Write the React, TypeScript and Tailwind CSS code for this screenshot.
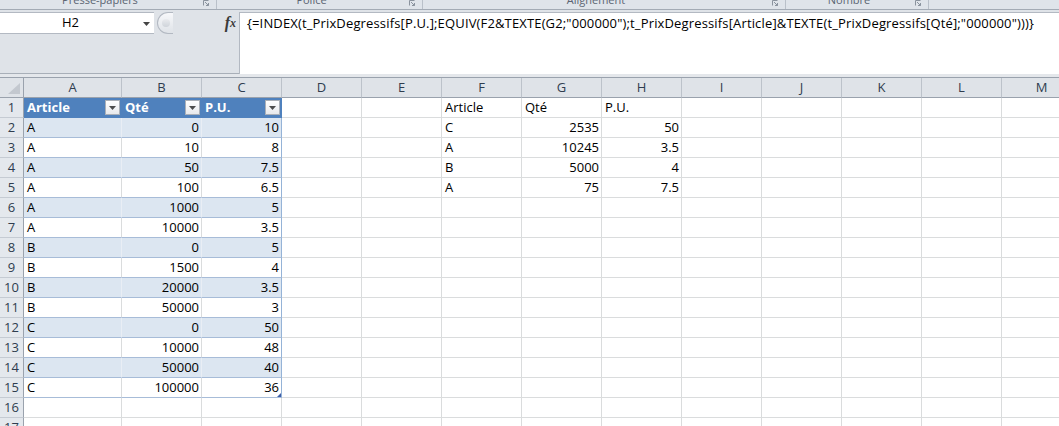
import React from "react";

const COLS = ["A", "B", "C", "D", "E", "F", "G", "H", "I", "J", "K", "L", "M"];
const WIDTHS = [
  "w-[98px]", "w-[80px]", "w-[80px]", "w-[80px]", "w-[80px]", "w-[80px]", "w-[80px]",
  "w-[80px]", "w-[80px]", "w-[80px]", "w-[80px]", "w-[80px]", "w-[80px]",
];

// rows 2..15 of t_PrixDegressifs
const PRIX: [string, number, number][] = [
  ["A", 0, 10], ["A", 10, 8], ["A", 50, 7.5], ["A", 100, 6.5], ["A", 1000, 5], ["A", 10000, 3.5],
  ["B", 0, 5], ["B", 1500, 4], ["B", 20000, 3.5], ["B", 50000, 3],
  ["C", 0, 50], ["C", 10000, 48], ["C", 50000, 40], ["C", 100000, 36],
];

const LOOKUP: (string | number)[][] = [
  ["Article", "Qté", "P.U."],
  ["C", 2535, 50],
  ["A", 10245, 3.5],
  ["B", 5000, 4],
  ["A", 75, 7.5],
];

const FORMULA =
  '{=INDEX(t_PrixDegressifs[P.U.];EQUIV(F2&TEXTE(G2;"000000");t_PrixDegressifs[Article]&TEXTE(t_PrixDegressifs[Qté];"000000")))}';

function Launcher() {
  return (
    <svg width="7" height="7" viewBox="0 0 7 7" className="absolute right-[6px] top-[0px]">
      <path d="M0.5 0.5H5.5" stroke="#8a939e" />
      <path d="M0.5 0.5V5.5" stroke="#8a939e" />
      <path d="M2 2L5.5 5.5M5.5 3V5.5H3" stroke="#8a939e" fill="none" />
    </svg>
  );
}

function Group({ label, w }: { label: string; w: string }) {
  return (
    <div className={`relative h-full ${w} border-r border-[#b9c0c9] pr-[16px] text-center`}>
      <div className="-mt-[7px] text-[11px] leading-[13px] text-[#5b6472]">{label}</div>
      <Launcher />
    </div>
  );
}

function FilterBtn() {
  return (
    <div className="ml-auto w-[15px] h-[15px] border border-[#aab0b8] bg-gradient-to-b from-white to-[#e7e9ec] flex items-center justify-center">
      <svg width="7" height="4" viewBox="0 0 7 4">
        <path d="M0 0H7L3.5 4Z" fill="#4d4d4d" />
      </svg>
    </div>
  );
}

function cell(r: number, c: number) {
  // returns classes + content for one grid cell
  let cls = "border-r border-b border-[#dadcdd] bg-white text-black";
  let content: React.ReactNode = null;
  let right = false;

  if (r === 1 && c < 3) {
    cls = "border-r border-b border-[#4f81bd] bg-[#4f81bd] text-white font-bold";
    content = (
      <>
        <span>{["Article", "Qté", "P.U."][c]}</span>
        <FilterBtn />
      </>
    );
    return { cls: `${cls} pr-[1px]`, content, right };
  }

  if (r >= 2 && r <= 15 && c < 3) {
    const row = PRIX[r - 2];
    const band = r % 2 === 0;
    const bg = band ? "bg-[#dce6f1]" : "bg-white";
    const rb = c === 2 ? "border-r-[#95b3d7]" : band ? "border-r-[#e9eef5]" : "border-r-[#dadcdd]";
    cls = `border-r border-b border-b-[#a7bcd8] ${rb} ${bg} text-black`;
    content = c === 0 ? row[0] : String(row[c]);
    right = c > 0;
  }

  if (r >= 1 && r <= 5 && c >= 5 && c <= 7) {
    const v = LOOKUP[r - 1][c - 5];
    content = String(v);
    right = typeof v === "number";
  }

  return { cls, content, right };
}

export default function App() {
  const rows = Array.from({ length: 17 }, (_, i) => i + 1);

  return (
    <div className="w-[1059px] h-[426px] overflow-hidden bg-white font-['Open_Sans',sans-serif]">
      {/* ribbon group labels (cut off) */}
      <div className="h-[10px] flex overflow-hidden bg-[#dfe4ea] border-b border-[#a3abb5]">
        <Group label="Presse-papiers" w="w-[217px]" />
        <Group label="Police" w="w-[206px]" />
        <Group label="Alignement" w="w-[363px]" />
        <Group label="Nombre" w="w-[143px]" />
        <div className="flex-1" />
      </div>

      {/* name box + formula bar */}
      <div className="h-[64px] flex bg-[#dfe3e8] border-b border-[#a8afb8] pt-[2px]">
        <div className="w-[239px] flex items-start">
          <div className="w-[154px] h-[22px] bg-white border-y border-[#b3b9c2] flex items-center relative">
            <span className="pl-[62px] text-[13px] text-black">H2</span>
            <svg width="7" height="4" viewBox="0 0 7 4" className="absolute left-[143px] top-[9px]">
              <path d="M0 0H7L3.5 4Z" fill="#444" />
            </svg>
          </div>
          <div className="ml-[3px] w-[16px] h-[22px] rounded-l-full border border-r-0 border-[#b3b9c2] bg-gradient-to-b from-[#f7f8fa] to-[#dfe3e8] flex items-center pl-[4px]">
            <div className="w-[8px] h-[8px] rounded-full bg-gradient-to-b from-[#e9ebee] to-[#cfd4da]" />
          </div>
          <div className="ml-auto mr-[3px] h-[22px] flex items-center font-['Liberation_Serif',serif] italic font-bold text-[16px] text-[#3a3a3a]">
            f<span className="text-[12px]">x</span>
          </div>
        </div>
        <div className="flex-1 h-[62px] bg-white border-l border-t border-[#b3b9c2] pl-[7px] pt-[1px] text-[13px] leading-[18px] text-black whitespace-nowrap tracking-[0.15px]">
          {FORMULA}
        </div>
      </div>

      <div className="h-[3px] bg-[#e4e7eb]" />

      {/* column headers */}
      <div className="flex border-t border-[#9aa2ad] text-[13px] text-[#2f3d4f]">
        <div className="w-[24px] h-[20px] shrink-0 bg-[#dfe3e8] border-r border-b border-[#9aa2ad] relative">
          <svg width="12" height="11" viewBox="0 0 12 11" className="absolute right-[3px] bottom-[3px]">
            <path d="M12 0V11H0Z" fill="#c3c8cf" />
          </svg>
        </div>
        {COLS.map((c, i) => (
          <div
            key={c}
            className={`${WIDTHS[i]} h-[20px] shrink-0 bg-[#dfe3e8] border-r border-b border-r-[#bcc2ca] border-b-[#9aa2ad] flex items-center justify-center`}
          >
            {c}
          </div>
        ))}
      </div>

      {/* grid */}
      {rows.map((r) => (
        <div key={r} className="flex text-[13px]">
          <div className="w-[24px] h-[20px] shrink-0 bg-[#e4e8ed] border-r border-b border-r-[#9aa2ad] border-b-[#c5cbd3] flex items-center justify-center text-[#2f3d4f]">
            {r}
          </div>
          {COLS.map((c, i) => {
            const { cls, content, right } = cell(r, i);
            return (
              <div
                key={c}
                className={`${WIDTHS[i]} h-[20px] shrink-0 ${cls} relative flex items-center whitespace-nowrap overflow-hidden ${right ? "justify-end pr-[2px]" : "pl-[3px]"}`}
              >
                {content}
                {r === 15 && i === 2 && (
                  <svg width="4" height="4" viewBox="0 0 4 4" className="absolute right-0 bottom-0">
                    <path d="M4 0V4H0Z" fill="#3e5ea8" />
                  </svg>
                )}
              </div>
            );
          })}
        </div>
      ))}
    </div>
  );
}
